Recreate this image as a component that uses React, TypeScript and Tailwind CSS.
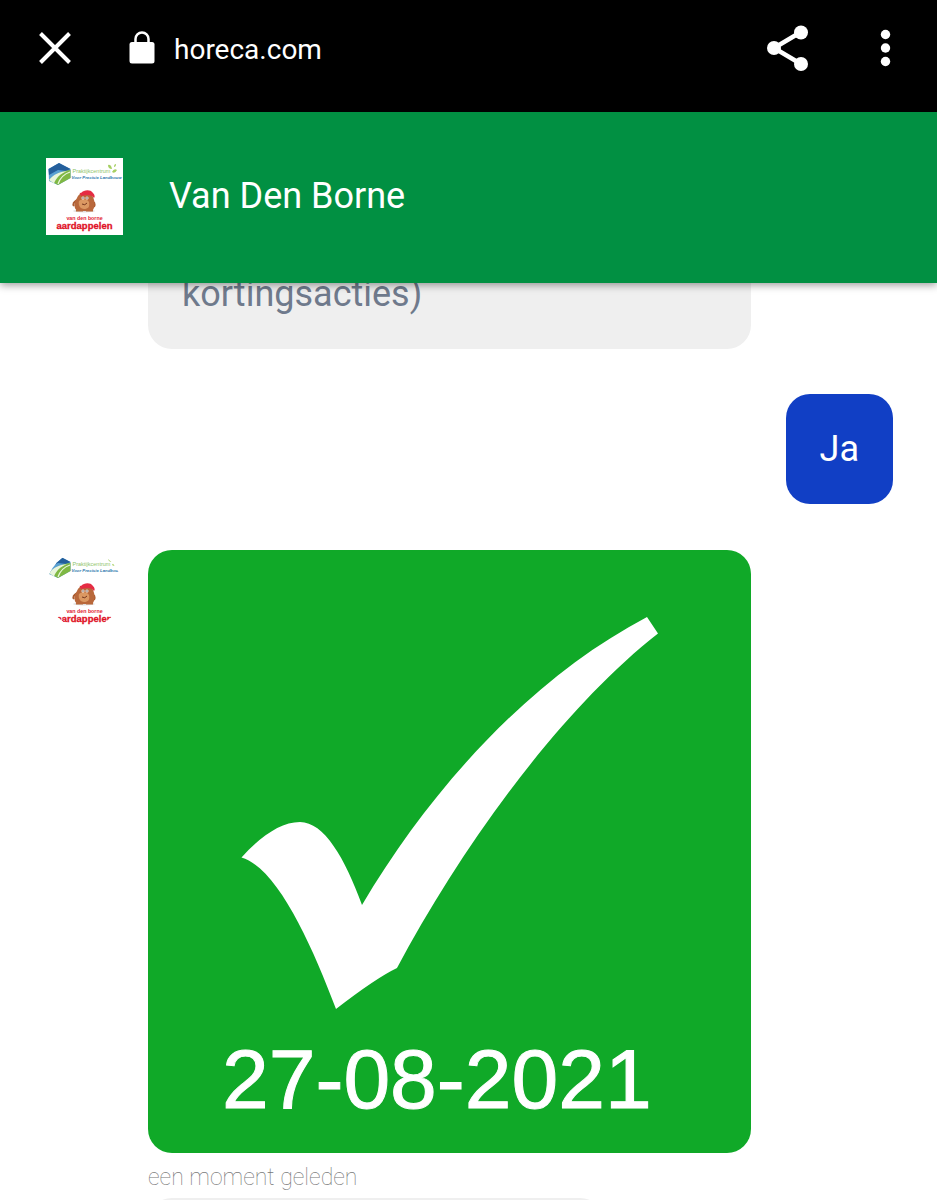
import React from "react";

function Logo({ className }: { className: string }) {
  return (
    <svg viewBox="0 0 77 77" role="img" aria-label="Van Den Borne Aardappelen" className={className}>
      <rect width="77" height="77" fill="#fff" />
      <path d="M2.500 11 13 5 24.500 11V20L12 27 3 23Z" fill="#5aa0d3" />
      <path d="M2.500 11 13 5 24.500 11 20 13 12 12 3 17Z" fill="#245f9c" />
      <path d="M3 22C8 17 15 13 24.500 12V20L12 27Z" fill="#7fb843" />
      <path d="M3 22C8 16 13 14 21 13 14 16 10 20 8 25.500Z" fill="#e9f5dc" />
      <path d="M12 26C14 20 18 16 24 14" fill="none" stroke="#e9f5dc" strokeWidth="1.200" />
      <text x="26.500" y="14.500" fontFamily="Liberation Sans, sans-serif" fontSize="5.500" fill="#8fc46a">Praktijkcentrum</text>
      <text x="25.500" y="21" fontFamily="Liberation Sans, sans-serif" fontSize="4.300" fontWeight="700" fontStyle="italic" fill="#2c78ad">Voor Precisie Landbouw</text>
      <path d="M66 11q-1-5-4-4 0 4 4 4M66 14q2-4 5-2-2 4-5 2M68 9q0-3 2-3 0 3-2 3" fill="#a6cf63" />
      <ellipse cx="38" cy="53" rx="11" ry="1.500" fill="#dedede" />
      <path d="M31 42q-5 3-3 6M45 43q5 1 3 6" fill="none" stroke="#a95b30" strokeWidth="2" />
      <path d="M31 40c2-6 10-8 14-4 4 4 5 14 1 17H32c-5-2-4-9-1-13Z" fill="#b9683b" />
      <path d="M33 43c3-3 9-2 10 1 1 5-1 7-5 7s-6-4-5-8Z" fill="#db9862" />
      <path d="M34 36q-1-2 1-1c3-3 9-4 12 0 2 2 2 4 1 5q-2-3-7-3l-6 1Z" fill="#e52c43" />
      <circle cx="37" cy="40" r="1.500" fill="#fff" />
      <circle cx="41" cy="40" r="1.500" fill="#fff" />
      <circle cx="37" cy="40" r=".7" fill="#472c20" />
      <circle cx="41" cy="40" r=".7" fill="#472c20" />
      <path d="M36 46q3 2 5-1" fill="none" stroke="#75371f" strokeWidth="1" />
      <path d="M30 52.500h7M40 52.500h7" stroke="#b9683b" strokeWidth="2" />
      <text x="38.500" y="61.500" textAnchor="middle" fontFamily="Liberation Sans, sans-serif" fontSize="5.300" fontWeight="700" fill="#df2034">van den borne</text>
      <text x="38.500" y="71" textAnchor="middle" fontFamily="Liberation Sans, sans-serif" fontSize="9.500" fontWeight="700" fill="#e01125" stroke="#e01125" strokeWidth=".3">aardappelen</text>
    </svg>
  );
}

function BrowserBar() {
  return (
    <div className="flex h-28 shrink-0 items-center bg-black pr-8 pb-4 pl-9 text-white">
      <button type="button" aria-label="Sluiten" className="mr-13">
        <svg viewBox="0 0 38 38" className="size-[38px]" fill="none" stroke="currentColor" strokeWidth="4">
          <path d="M4.500 4.500 33.500 33.500M33.500 4.500 4.500 33.500" />
        </svg>
      </button>
      <svg viewBox="0 0 32 36" className="mr-4 h-9 w-8" aria-hidden="true">
        <rect x="3.500" y="12" width="25" height="21.500" rx="2.500" fill="currentColor" />
        <path d="M9.500 13V9a6.500 6.500 0 0 1 13 0v4" fill="none" stroke="currentColor" strokeWidth="2.500" />
      </svg>
      <span className="pt-1 text-[28px] leading-8">horeca.com</span>
      <button type="button" aria-label="Delen" className="ml-auto">
        <svg viewBox="0 0 42 46" className="h-[46px] w-[42px]" fill="currentColor">
          <path d="M34 7 7 23l27 16" fill="none" stroke="currentColor" strokeWidth="4.500" />
          <circle cx="34" cy="7.500" r="7" />
          <circle cx="7" cy="23" r="7" />
          <circle cx="34" cy="39" r="7" />
        </svg>
      </button>
      <button type="button" aria-label="Meer opties" className="ml-14">
        <svg viewBox="0 0 40 40" className="size-10" fill="currentColor">
          <circle cx="20.500" cy="6.500" r="4.700" />
          <circle cx="20.500" cy="20" r="4.700" />
          <circle cx="20.500" cy="33.500" r="4.700" />
        </svg>
      </button>
    </div>
  );
}

function ConfirmationCard() {
  return (
    <svg viewBox="0 0 603 603" role="img" aria-label="Bevestigd, 27-08-2021" className="block w-full rounded-3xl bg-[#10a928]">
      <path
        d="M93.500 307.500C113 286 133 272 152 272C176 272 197 308 214 355C285 235 385 127 499 67L510 83.500C411 161 313 298 249 418Q228 428 188 459C163 393 129 318 93.500 307.500Z"
        fill="#fff"
      />
      <text x="74" y="558" fontFamily="Liberation Sans, Arial, sans-serif" fontSize="84" fill="#fff" stroke="#fff" strokeWidth="1">27-08-2021</text>
    </svg>
  );
}

export default function App() {
  return (
    <div className="flex h-screen flex-col overflow-hidden bg-white font-['Roboto',sans-serif]">
      <BrowserBar />
      <header className="z-10 flex shrink-0 items-center gap-[46px] bg-[#019042] px-[46px] pt-[46px] pb-12 text-white shadow-[0_2px_8px_rgba(0,0,0,0.4)]">
        <Logo className="size-[77px]" />
        <h1 className="pb-0.5 text-4xl font-normal">Van Den Borne</h1>
      </header>
      <main className="min-h-0 flex-1 overflow-hidden pr-11 pl-[46px]">
        <div className="-mt-11 ml-[102px] max-w-[603px] rounded-3xl bg-[#efefef] px-[34px] pt-[35px] pb-[35px]">
          <p className="text-4xl text-[#6f7a8c]">kortingsacties)</p>
        </div>
        <div className="mt-[45px] flex justify-end">
          <p className="rounded-3xl bg-[#113fc5] px-[34px] py-[35px] text-4xl text-white">Ja</p>
        </div>
        <div className="mt-[46px] flex items-start gap-[25px]">
          <Logo className="mt-px size-[77px] shrink-0 rounded-full" />
          <div className="min-w-0 max-w-[603px] flex-1">
            <ConfirmationCard />
            <time className="mt-[9px] block text-[23px] leading-8 font-thin text-[#777]">een moment geleden</time>
            <div className="mt-1 h-28 max-w-[456px] rounded-3xl bg-[#efefef]" />
          </div>
        </div>
      </main>
    </div>
  );
}
